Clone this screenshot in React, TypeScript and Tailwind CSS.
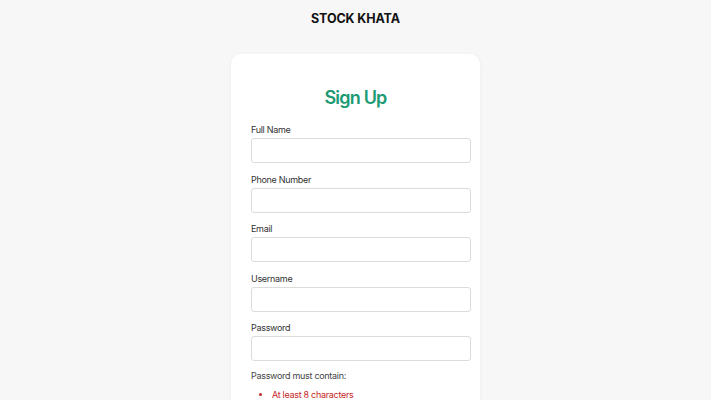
import { useState } from "react";

const fields = [
    { id: "fullName", label: "Full Name", type: "text" },
    { id: "phone", label: "Phone Number", type: "tel" },
    { id: "email", label: "Email", type: "email" },
    { id: "username", label: "Username", type: "text" },
    { id: "password", label: "Password", type: "password" },
];

const rules = ["At least 8 characters", "One uppercase letter", "One number"];

function App() {
    const [values, setValues] = useState<Record<string, string>>({});

    return (
        <div className="min-h-screen bg-[#f7f7f7] font-['Inter',sans-serif] flex flex-col items-center">
            <h1 className="mt-[11px] text-[12.5px] leading-[16px] font-bold text-[#111] tracking-[-0.1px]">STOCK KHATA</h1>
            <div className="mt-[27px] w-[249px] bg-white rounded-[10px] shadow-[0_1px_4px_rgba(0,0,0,0.05)] pl-5 pr-[9px] pt-[32px] pb-6">
                <h2 className="mr-[11px] text-center text-[18px] leading-[24px] font-semibold text-[#1c9a73] tracking-[-0.8px] mb-[13px]">Sign Up</h2>
                <div className="flex flex-col gap-[9.5px]">
                    {fields.map((f) => (
                        <div key={f.id} className="flex flex-col">
                            <label htmlFor={f.id} className="text-[9px] leading-[13px] tracking-[-0.3px] text-[#333] mb-[2px]">
                                {f.label}
                            </label>
                            <input
                                id={f.id}
                                type={f.type}
                                value={values[f.id] ?? ""}
                                onChange={(e) => setValues({ ...values, [f.id]: e.target.value })}
                                className="w-[220px] h-[25px] border border-[#dcdcdc] rounded-[3px] px-2 text-[10px] outline-none"
                            />
                        </div>
                    ))}
                </div>
                <p className="mt-[7.5px] text-[9px] leading-[13px] tracking-[-0.3px] text-[#444]">Password must contain:</p>
                <ul className="mt-[6px] pl-[21px] list-disc text-[9px] leading-[13px] tracking-[-0.3px] text-[#c62828] marker:text-[#c62828]">
                    {rules.map((r) => (
                        <li key={r}>{r}</li>
                    ))}
                </ul>
            </div>
        </div>
    );
}

export default App;
